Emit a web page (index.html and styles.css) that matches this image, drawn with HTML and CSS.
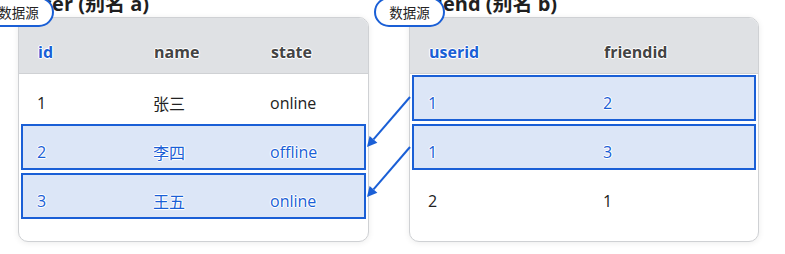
FILE: index.html
```html
<!DOCTYPE html>
<html lang="zh">
<head>
<meta charset="utf-8">
<link rel="stylesheet" href="styles.css">
</head>
<body>
<div class="stage">
  <div class="panel panel-a">
    <div class="title">user (别名 a)</div>
    <span class="badge">数据源</span>
    <div class="card">
      <div class="head cols3">
        <span class="key">id</span><span>name</span><span>state</span>
      </div>
      <div class="row cols3"><span>1</span><span>张三</span><span>online</span></div>
      <div class="row cols3 hl"><span>2</span><span>李四</span><span>offline</span></div>
      <div class="row cols3 hl"><span>3</span><span>王五</span><span>online</span></div>
    </div>
  </div>
  <div class="panel panel-b">
    <div class="title">friend (别名 b)</div>
    <span class="badge">数据源</span>
    <div class="card">
      <div class="head cols2">
        <span class="key">userid</span><span>friendid</span>
      </div>
      <div class="row cols2 hl"><span>1</span><span>2</span></div>
      <div class="row cols2 hl"><span>1</span><span>3</span></div>
      <div class="row cols2"><span>2</span><span>1</span></div>
    </div>
  </div>
  <svg class="arrows" width="785" height="254" viewBox="0 0 785 254">
    <g stroke="#1a5fd6" stroke-width="2" fill="none">
      <line x1="410" y1="97" x2="373.5" y2="139.4"/>
      <line x1="410" y1="147" x2="373.5" y2="189.4"/>
    </g>
    <g fill="#1a5fd6">
      <polygon points="367,147 377.4,142.7 369.6,136.1"/>
      <polygon points="367,197 377.4,192.7 369.6,186.1"/>
    </g>
  </svg>
</div>
</body>
</html>
```
FILE: styles.css
```css
html, body {
  margin: 0;
  padding: 0;
  background: #ffffff;
  overflow: hidden;
}
body {
  font-family: "Open Sans", "Noto Sans CJK SC", sans-serif;
  color: #222222;
}
.stage {
  position: relative;
  display: flex;
  gap: 40px;
  padding-left: 18px;
  width: 785px;
  height: 254px;
  box-sizing: border-box;
}
.panel {
  position: relative;
}
.panel-a { width: 351px; }
.panel-b { width: 350px; }
.title {
  margin: -6px 0 3px 11px;
  height: 20px;
  line-height: 20px;
  font-size: 20px;
  font-weight: 700;
  color: #1f1f1f;
  white-space: nowrap;
}
.badge {
  position: absolute;
  left: -35px;
  top: -3px;
  width: 71px;
  height: 30px;
  box-sizing: border-box;
  border: 2px solid #1a5fd6;
  border-radius: 15px;
  background: #ffffff;
  font-size: 13.5px;
  line-height: 26px;
  text-align: center;
  color: #222222;
  font-family: "Noto Sans CJK SC", sans-serif;
}
.card {
  height: 225px;
  box-sizing: border-box;
  border: 1px solid #cfd1d4;
  border-radius: 10px;
  background: #ffffff;
  box-shadow: 0 1px 6px rgba(0, 0, 0, 0.08);
  overflow: hidden;
}
.head {
  height: 56px;
  box-sizing: border-box;
  padding: 12px 0 0 19px;
  background: #dfe1e4;
  border-bottom: 1px solid #cfd1d4;
  align-items: center;
  font-weight: 700;
  font-size: 16px;
  color: #444444;
}
.head span, .row span {
  text-shadow: 1px 0 #fff, -1px 0 #fff, 0 1px #fff, 0 -1px #fff, 0 0 2px #fff;
}
.head .key {
  color: #1a5fd6;
}
.cols3 {
  display: grid;
  grid-template-columns: 116px 117px 1fr;
}
.cols2 {
  display: grid;
  grid-template-columns: 175px 1fr;
}
.row {
  height: 46px;
  margin: 1px 2px 3px;
  box-sizing: border-box;
  border: 2px solid transparent;
  padding: 10px 0 0 14px;
  align-items: center;
  font-size: 16px;
  color: #222222;
}
.row.hl {
  border-color: #1a5fd6;
  background: #dce6f7;
  color: #1a5fd6;
}
.arrows {
  position: absolute;
  left: 0;
  top: 0;
  pointer-events: none;
}
```
